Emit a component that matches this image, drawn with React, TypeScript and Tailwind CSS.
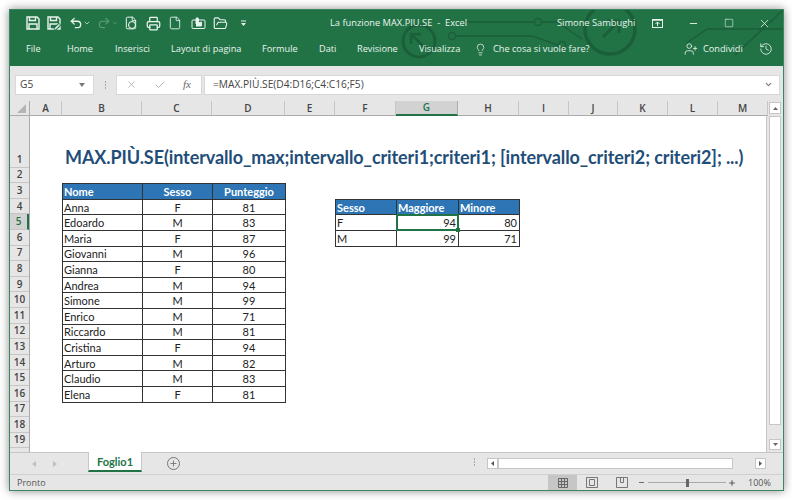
import React from "react";
import { Undo2, Redo2, Printer, File, FolderOpen, Lightbulb, UserPlus, History, Minus, Square, X, Check, ChevronDown, Plus } from "lucide-react";

const COLS: [string, string][] = [["A","w-[32px]"],["B","w-[80px]"],["C","w-[70px]"],["D","w-[73px]"],["E","w-[50px]"],["F","w-[61px]"],["G","w-[62px]"],["H","w-[61px]"],["I","w-[50px]"],["J","w-[49px]"],["K","w-[50px]"],["L","w-[50px]"],["M","w-[50px]"]];
const PEOPLE: [string,string,string][] = [["Anna","F","81"],["Edoardo","M","83"],["Maria","F","87"],["Giovanni","M","96"],["Gianna","F","80"],["Andrea","M","94"],["Simone","M","99"],["Enrico","M","71"],["Riccardo","M","81"],["Cristina","F","94"],["Arturo","M","82"],["Claudio","M","83"],["Elena","F","81"]];
const MENU = [["File","w-[57px] pl-[16px]"],["Home","w-[48px]"],["Inserisci","w-[56px]"],["Layout di pagina","w-[91px]"],["Formule","w-[57px]"],["Dati","w-[38px]"],["Revisione","w-[62px]"],["Visualizza","w-[55px]"]];
const ROWS = Array.from({length:18},(_,i)=>i+2);

function Floppy({ badge }: { badge?: boolean }) {
  return (
    <svg width="14" height="14" viewBox="0 0 14 14" fill="none" stroke="currentColor" strokeWidth="1.4" className="shrink-0">
      <path d="M1 1h10l2 2v10H1z" />
      <path d="M3.5 1v3.5h6V1M3 13V8h8v5" />
      {badge && <path d="M7.5 13.5l5.5-5.5" stroke="#217346" strokeWidth="3.5" />}
      {badge && <path d="M8 13l4.5-4.5" strokeWidth="1.6" />}
    </svg>
  );
}

export default function App() {
  return (
    <div className="w-[792px] h-[500px] bg-white pt-[9px] pl-[9px]">
      <div className="w-[775px] h-[482px] flex flex-col border border-[#3b8560] bg-[#e6e6e6] shadow-[0_0_9px_rgba(0,0,0,0.45)] overflow-hidden [font-family:'Open_Sans','Noto_Sans',sans-serif]">
        <div className="relative h-[56px] shrink-0 bg-[#217346] text-[#eaf3ee]">
          <svg className="absolute inset-0" width="775" height="56" fill="none" stroke="#1b5f3a" strokeWidth="1.5">
            <path d="M450 12H524M532 12H547L572 29" />
            <path d="M446 26H522L548 35" />
            <circle cx="528" cy="12" r="3.5" />
            <circle cx="442" cy="26" r="3.5" />
            <circle cx="552" cy="35" r="3.5" />
            <circle cx="409" cy="31" r="16" strokeWidth="3" />
            <path d="M401 34V24H411M401 24L416 39" strokeWidth="2.5" />
            <circle cx="600" cy="19" r="25" strokeWidth="3.5" />
            <path d="M593 27L609 11M597 11H609V23" strokeWidth="3" />
            <path d="M677 33L697 19H773M725 45L772 1" />
          </svg>
          <div className="relative h-[25px] pt-[1px] flex items-center">
            <div className="w-[320px] pl-[16px] flex items-center shrink-0">
              <Floppy />
              <span className="ml-[7px]"><Floppy badge /></span>
              <span className="flex items-center ml-[8px]"><Undo2 size={14} strokeWidth={2.2} /><ChevronDown size={8} className="ml-[0px]" /></span>
              <span className="flex items-center text-[#5b9c79] ml-[6px]"><Redo2 size={14} /><ChevronDown size={8} /></span>
              <span className="relative ml-[5px]"><File size={14} strokeWidth={1.7} /><span className="absolute left-[4px] top-[5px] w-[8px] h-[8px] rounded-full border-[1.5px] border-white bg-[#217346]" /></span>
              <Printer size={15} strokeWidth={2} className="ml-[8px]" />
              <File size={14} strokeWidth={1.5} className="ml-[7px]" />
              <svg width="15" height="14" viewBox="0 0 15 14" fill="none" stroke="currentColor" className="ml-[9px] shrink-0"><rect x="1" y="4" width="13" height="8.5" rx="1" /><path d="M5 8V3a1.2 1.2 0 0 1 2.4 0v4l3-1v4H5" fill="currentColor" /></svg>
              <FolderOpen size={15} strokeWidth={1.8} className="ml-[7px]" />
              <svg width="7" height="7" viewBox="0 0 7 7" className="ml-[12px]" fill="currentColor"><rect x="1" y="0.5" width="5" height="1" /><path d="M1 3h5L3.5 6z" /></svg>
            </div>
            <div className="w-[131px] text-[9.3px] shrink-0 whitespace-nowrap">La funzione MAX.PIU.SE&nbsp; - &nbsp;Excel</div>
            <div className="ml-[96px] text-[9.3px] w-[75px] shrink-0 whitespace-nowrap">Simone Sambughi</div>
            <svg width="11" height="9" viewBox="0 0 11 9" className="ml-[20px] shrink-0" fill="none" stroke="currentColor"><rect x="0.5" y="0.5" width="10" height="8" /><path d="M5.5 7V3M3.5 5l2-2 2 2" /><path d="M0 1h11" strokeWidth="1.5" /></svg>
            <Minus size={11} className="ml-[25px] shrink-0" />
            <Square size={10} strokeWidth={1.4} className="ml-[25px] shrink-0" />
            <X size={13} strokeWidth={1.4} className="ml-[24px] shrink-0" />
          </div>
          <div className="relative h-[28px] flex items-center text-[9.2px]">
            {MENU.map(([t,w])=><div key={t} className={`${w} shrink-0 whitespace-nowrap`}>{t}</div>)}
            <Lightbulb size={13} strokeWidth={1.4} className="shrink-0" />
            <div className="ml-[6px] w-[94px] shrink-0 whitespace-nowrap">Che cosa si vuole fare?</div>
            <UserPlus size={14} strokeWidth={1.4} className="ml-[97px] shrink-0" />
            <div className="ml-[5px] w-[39px] shrink-0">Condividi</div>
            <History size={14} strokeWidth={1.4} className="ml-[17px] shrink-0" />
          </div>
        </div>

        <div className="h-[35px] shrink-0 flex items-center pl-[5px] pr-[3px] pt-[8px] pb-[6px] text-[10.2px] text-[#444]">
          <div className="w-[79px] h-[20px] shrink-0 bg-white border border-[#d8d8d8] flex items-center pl-[4px]">
            <span className="flex-1">G5</span>
            <svg width="6" height="4" viewBox="0 0 6 4" className="mr-[8px]" fill="#777"><path d="M0 0h6L3 4z" /></svg>
          </div>
          <div className="w-[22px] h-[20px] shrink-0 flex flex-col items-center justify-center gap-[1px]">
            <span className="w-[1px] h-[2px] bg-[#aaa]" /><span className="w-[1px] h-[2px] bg-[#aaa]" /><span className="w-[1px] h-[2px] bg-[#aaa]" />
          </div>
          <div className="w-[86px] h-[20px] shrink-0 bg-white border border-[#d8d8d8] flex items-center text-[#b5b5b5]">
            <X size={11} className="ml-[9px]" />
            <Check size={12} className="ml-[17px]" />
            <span className="ml-[17px] text-[11px] italic text-[#666] [font-family:'Liberation_Serif',serif]">fx</span>
          </div>
          <div className="ml-[2px] flex-1 h-[20px] bg-white border border-[#d8d8d8] flex items-center pl-[8px] pr-[6px]">
            <span className="flex-1">=MAX.PIÙ.SE(D4:D16;C4:C16;F5)</span>
            <ChevronDown size={9} strokeWidth={3} className="text-[#777]" />
          </div>
        </div>

        <div className="h-[15px] shrink-0 flex text-[10px] text-[#444] font-semibold">
          <div className="w-[20px] flex items-end justify-end pr-[3px] pb-[2px] border-b border-[#ababab] border-r">
            <svg width="9" height="9" viewBox="0 0 9 9" fill="#b5b5b5"><path d="M9 0v9H0z" /></svg>
          </div>
          {COLS.map(([c,w])=>(
            <div key={c} className={`${w} shrink-0 flex items-center justify-center border-r ${c==="G"?"bg-[#d2d2d2] text-[#217346] border-b-2 border-b-[#217346] border-r-[#ababab]":"border-b border-[#ababab] border-r-[#c6c6c6]"}`}>{c}</div>
          ))}
          <div className="flex-1 flex items-center pl-[1px] pb-[1px]">
            <div className="w-[12px] h-[12px] bg-white border border-[#c6c6c6] flex items-center justify-center"><svg width="5" height="3" viewBox="0 0 5 3" fill="#666"><path d="M0 3h5L2.5 0z" /></svg></div>
          </div>
        </div>

        <div className="h-[336px] shrink-0 flex overflow-hidden">
          <div className="w-[20px] shrink-0 flex flex-col border-r border-[#ababab] text-[10px] text-[#444] font-semibold leading-[15px]">
            <div className="h-[51.6px] shrink-0 flex items-end justify-center border-b border-[#c6c6c6]">1</div>
            {ROWS.map(r=>(
              <div key={r} className={`h-[15.6px] shrink-0 flex items-center justify-center border-b ${r===5?"bg-[#d2d2d2] text-[#217346] border-r-2 border-r-[#217346] border-b-[#c6c6c6]":"border-[#c6c6c6]"}`}>{r}</div>
            ))}
          </div>
          <div className="w-[737px] shrink-0 bg-white border-r border-[#c6c6c6] [font-family:Lato,'Open_Sans',sans-serif] text-[11px] text-[#222]">
            <div className="h-[51.6px] flex items-end pl-[35px] pb-[1px] text-[18px] leading-[20px] font-bold text-[#1f4e79] whitespace-nowrap tracking-[-0.1px]">MAX.PIÙ.SE(intervallo_max;intervallo_criteri1;criteri1; [intervallo_criteri2; criteri2]; ...)</div>
            <div className="h-[15.6px]" />
            <div className="flex items-start pl-[32px]">
              <table className="w-[223px] table-fixed border-collapse">
                <colgroup><col className="w-[80px]" /><col className="w-[70px]" /><col className="w-[73px]" /></colgroup>
                <thead>
                  <tr className="h-[15.6px] bg-[#2e75b6] text-white font-bold">
                    <th className="border border-[#333] pl-[1px] text-left font-bold leading-none">Nome</th>
                    <th className="border border-[#333] font-bold leading-none">Sesso</th>
                    <th className="border border-[#333] font-bold leading-none">Punteggio</th>
                  </tr>
                </thead>
                <tbody>
                  {PEOPLE.map(([n,s,p])=>(
                    <tr key={n} className="h-[15.6px]">
                      <td className="border border-[#333] pl-[1px] leading-none">{n}</td>
                      <td className="border border-[#333] text-center leading-none">{s}</td>
                      <td className="border border-[#333] text-center leading-none">{p}</td>
                    </tr>
                  ))}
                </tbody>
              </table>
              <table className="ml-[49px] mt-[15.6px] w-[184px] table-fixed border-collapse">
                <colgroup><col className="w-[61px]" /><col className="w-[62px]" /><col className="w-[61px]" /></colgroup>
                <thead>
                  <tr className="h-[15.6px] bg-[#2e75b6] text-white">
                    {["Sesso","Maggiore","Minore"].map(t=><th key={t} className="border border-[#333] pl-[1px] text-left font-bold leading-none">{t}</th>)}
                  </tr>
                </thead>
                <tbody>
                  <tr className="h-[15.6px]">
                    <td className="border border-[#333] pl-[1px] leading-none">F</td>
                    <td className="relative border border-[#333] pr-[2px] text-right leading-none">94
                      <span className="absolute -inset-[1px] border-2 border-[#217346]" />
                      <span className="absolute -right-[2px] -bottom-[2px] w-[4px] h-[4px] bg-[#217346]" />
                    </td>
                    <td className="border border-[#333] pr-[2px] text-right leading-none">80</td>
                  </tr>
                  <tr className="h-[15.6px]">
                    <td className="border border-[#333] pl-[1px] leading-none">M</td>
                    <td className="border border-[#333] pr-[2px] text-right leading-none">99</td>
                    <td className="border border-[#333] pr-[2px] text-right leading-none">71</td>
                  </tr>
                </tbody>
              </table>
            </div>
          </div>
          <div className="flex-1 flex flex-col pl-[2px] pb-[2px]">
            <div className="h-[309px] w-[12px] bg-white border border-[#c6c6c6]" />
            <div className="flex-1" />
            <div className="w-[12px] h-[11px] bg-white border border-[#c6c6c6] flex items-center justify-center"><svg width="5" height="3" viewBox="0 0 5 3" fill="#666"><path d="M0 0h5L2.5 3z" /></svg></div>
          </div>
        </div>

        <div className="h-[22px] shrink-0 flex border-t border-[#c6c6c6] text-[#999]">
          <div className="w-[78px] shrink-0 flex items-center pl-[22px] gap-[17px] text-[#c0c0c0]">
            <svg width="4" height="6" viewBox="0 0 4 6" fill="currentColor"><path d="M4 0v6L0 3z" /></svg>
            <svg width="4" height="6" viewBox="0 0 4 6" fill="currentColor"><path d="M0 0v6l4-3z" /></svg>
          </div>
          <div className="w-[54px] shrink-0 -mt-[1px] h-[20px] pt-[2px] bg-white border-x border-[#c6c6c6] border-b-2 border-b-[#217346] flex items-center justify-center text-[11px] font-bold text-[#217346] [font-family:Lato,sans-serif]">Foglio1</div>
          <div className="ml-[25px] shrink-0 mt-[4px] w-[13px] h-[13px] rounded-full border border-[#777] flex items-center justify-center text-[#777]"><Plus size={9} strokeWidth={2.5} /></div>
          <div className="ml-[294px] shrink-0 mt-[5px] flex flex-col gap-[1px]">
            <span className="w-[1px] h-[2px] bg-[#aaa]" /><span className="w-[1px] h-[2px] bg-[#aaa]" /><span className="w-[1px] h-[2px] bg-[#aaa]" />
          </div>
          <div className="ml-[12px] shrink-0 mt-[5px] w-[11px] h-[11px] bg-white border border-[#c6c6c6] flex items-center justify-center"><svg width="3" height="5" viewBox="0 0 3 5" fill="#555"><path d="M3 0v5L0 2.5z" /></svg></div>
          <div className="mt-[5px] shrink-0 w-[235px] h-[11px] bg-white border border-[#c6c6c6]" />
          <div className="w-[22px] shrink-0" />
          <div className="mt-[5px] shrink-0 w-[11px] h-[11px] bg-white border border-[#c6c6c6] flex items-center justify-center"><svg width="3" height="5" viewBox="0 0 3 5" fill="#555"><path d="M0 0v5l3-2.5z" /></svg></div>
        </div>

        <div className="flex-1 flex items-center border-t border-[#d0d0d0] pl-[7px] text-[9px] text-[#555]">
          <span className="w-[531px] shrink-0">Pronto</span>
          <div className="h-full w-[29px] shrink-0 bg-[#c6c6c6] flex items-center justify-center">
            <svg width="10" height="10" viewBox="0 0 10 10" fill="none" stroke="#666" strokeWidth="1"><path d="M.5.5h9v9h-9zM3.5.5v9M6.5.5v9M.5 3.5h9M.5 6.5h9" /></svg>
          </div>
          <div className="w-[30px] shrink-0 flex items-center justify-center">
            <svg width="12" height="11" viewBox="0 0 12 11" fill="none" stroke="#777"><path d="M.5.5h11v10H.5zM3.5 2.5h5v6h-5z" /></svg>
          </div>
          <div className="w-[30px] shrink-0 flex items-center justify-center">
            <svg width="12" height="11" viewBox="0 0 12 11" fill="none" stroke="#777"><path d="M.5.5h11v10H.5zM4.5.5v5h3v-5" /></svg>
          </div>
          <Minus size={7} strokeWidth={3} className="ml-[1px] shrink-0 text-[#555]" />
          <div className="relative ml-[3px] shrink-0 w-[78px] h-[1px] bg-[#aaa]"><span className="absolute left-[38px] -top-[3.5px] w-[3px] h-[8px] bg-[#666]" /></div>
          <Plus size={8} strokeWidth={3} className="ml-[2px] shrink-0 text-[#555]" />
          <span className="ml-[12px] shrink-0">100%</span>
        </div>
      </div>
    </div>
  );
}
